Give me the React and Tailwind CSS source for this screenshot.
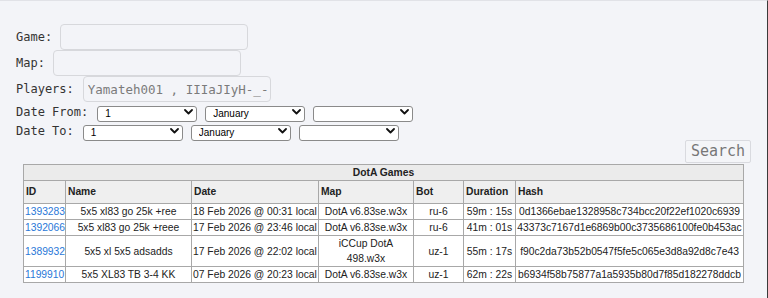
import React from "react";

const mono = { fontFamily: '"DejaVu Sans Mono", "Liberation Mono", monospace' };
const sans = { fontFamily: '"Liberation Sans", Arial, sans-serif' };

function Chevron() {
  return (
    <svg
      className="pointer-events-none absolute right-[4px] top-1/2 -translate-y-1/2"
      width="9"
      height="6"
      viewBox="0 0 9 6"
    >
      <path d="M1 1 L4.5 4.5 L8 1" fill="none" stroke="#111" strokeWidth="1.8" strokeLinecap="round" strokeLinejoin="round" />
    </svg>
  );
}

function Select({ value, options }) {
  return (
    <div className="relative w-[100px] h-[16px]">
      <select
        defaultValue={value}
        className="appearance-none w-full h-full bg-white border border-[#8a8a8a] rounded-[3px] pl-[7px] pr-[14px] text-[10px] leading-[14px] text-black outline-none"
        style={sans}
      >
        {options.map((o) => (
          <option key={o} value={o}>
            {o}
          </option>
        ))}
      </select>
      <Chevron />
    </div>
  );
}

const days = ["1", "2", "3"];
const months = ["January", "February", "March"];

const rows = [
  {
    id: "1393283",
    name: "5x5 xl83 go 25k +ree",
    date: "18 Feb 2026 @ 00:31 local",
    map: "DotA v6.83se.w3x",
    bot: "ru-6",
    dur: "59m : 15s",
    hash: "0d1366ebae1328958c734bcc20f22ef1020c6939",
  },
  {
    id: "1392066",
    name: "5x5 xl83 go 25k +reee",
    date: "17 Feb 2026 @ 23:46 local",
    map: "DotA v6.83se.w3x",
    bot: "ru-6",
    dur: "41m : 01s",
    hash: "43373c7167d1e6869b00c3735686100fe0b453ac",
  },
  {
    id: "1389932",
    name: "5x5 xl 5x5 adsadds",
    date: "17 Feb 2026 @ 22:02 local",
    map: "iCCup DotA 498.w3x",
    bot: "uz-1",
    dur: "55m : 17s",
    hash: "f90c2da73b52b0547f5fe5c065e3d8a92d8c7e43",
  },
  {
    id: "1199910",
    name: "5x5 XL83 TB 3-4 KK",
    date: "07 Feb 2026 @ 20:23 local",
    map: "DotA v6.83se.w3x",
    bot: "uz-1",
    dur: "62m : 22s",
    hash: "b6934f58b75877a1a5935b80d7f85d182278ddcb",
  },
];

export default function App() {
  const td = "border border-[#a8a8a8] px-[1px] py-0 text-center leading-[15px] whitespace-normal";
  const th = "border border-[#a8a8a8] px-[2px] py-0 text-left font-bold leading-[22px] bg-[#efefef]";
  return (
    <div className="w-[768px] h-[298px] bg-[#f3f4f8] border-t border-[#e1e2e7] border-r border-r-[#3a3a3a] overflow-hidden text-[#222]">
      <div className="pl-[16px] pt-[23px] text-[12px] text-[#333]" style={mono}>
        <div className="flex items-center h-[26px]">
          <span>Game:</span>
          <input className="ml-[8px] w-[188px] h-[26px] border border-[#d7d8dc] rounded-[4px] bg-transparent outline-none" />
        </div>
        <div className="flex items-center h-[26px]">
          <span>Map:</span>
          <input className="ml-[8px] w-[188px] h-[26px] border border-[#d7d8dc] rounded-[4px] bg-transparent outline-none" />
        </div>
        <div className="flex items-center h-[26px]">
          <span>Players:</span>
          <input
            defaultValue="Yamateh001 , IIIaJIyH-_- , player"
            className="ml-[9px] w-[188px] h-[26px] border border-[#d7d8dc] rounded-[4px] bg-transparent outline-none pl-[4px] text-[12.5px] text-[#7b7b7b]"
            style={mono}
          />
        </div>
        <div className="flex items-center h-[16px] mt-[2px]">
          <span>Date From:</span>
          <div className="ml-[9px] flex gap-[8px]">
            <Select value="1" options={days} />
            <Select value="January" options={months} />
            <Select value="" options={["", "2026", "2025"]} />
          </div>
        </div>
        <div className="flex items-center h-[16px] mt-[3px]">
          <span>Date To:</span>
          <div className="ml-[9px] flex gap-[8px]">
            <Select value="1" options={days} />
            <Select value="January" options={months} />
            <Select value="" options={["", "2026", "2025"]} />
          </div>
        </div>
      </div>
      <div className="flex justify-end pr-[16px] mt-[1px]">
        <button
          className="w-[66px] h-[23px] border border-[#d9dadf] rounded-[2px] bg-[#f4f5f8] text-[15px] text-[#777] leading-[21px]"
          style={mono}
        >
          Search
        </button>
      </div>
      <table
        className="mx-auto mt-[1px] w-[720px] table-fixed border-collapse border border-[#8f8f8f] text-[10.3px] text-[#222]"
        style={sans}
      >
        <colgroup>
          <col style={{ width: 42 }} />
          <col style={{ width: 126 }} />
          <col style={{ width: 127 }} />
          <col style={{ width: 95 }} />
          <col style={{ width: 50 }} />
          <col style={{ width: 52 }} />
          <col style={{ width: 228 }} />
        </colgroup>
        <thead>
          <tr>
            <th colSpan={7} className="border border-[#a8a8a8] bg-[#ebebeb] font-bold text-center leading-[15px] py-0">
              DotA Games
            </th>
          </tr>
          <tr>
            <th className={th}>ID</th>
            <th className={th}>Name</th>
            <th className={th}>Date</th>
            <th className={th}>Map</th>
            <th className={th}>Bot</th>
            <th className={th}>Duration</th>
            <th className={th}>Hash</th>
          </tr>
        </thead>
        <tbody className="bg-white">
          {rows.map((r) => (
            <tr key={r.id}>
              <td className={td}>
                <a href="#" className="text-[#2a78d8]">
                  {r.id}
                </a>
              </td>
              <td className={td}>{r.name}</td>
              <td className={td + " whitespace-nowrap"}>{r.date}</td>
              <td className={td}>{r.map}</td>
              <td className={td}>{r.bot}</td>
              <td className={td + " whitespace-nowrap"}>{r.dur}</td>
              <td className={td + " whitespace-nowrap"}>{r.hash}</td>
            </tr>
          ))}
        </tbody>
      </table>
    </div>
  );
}
